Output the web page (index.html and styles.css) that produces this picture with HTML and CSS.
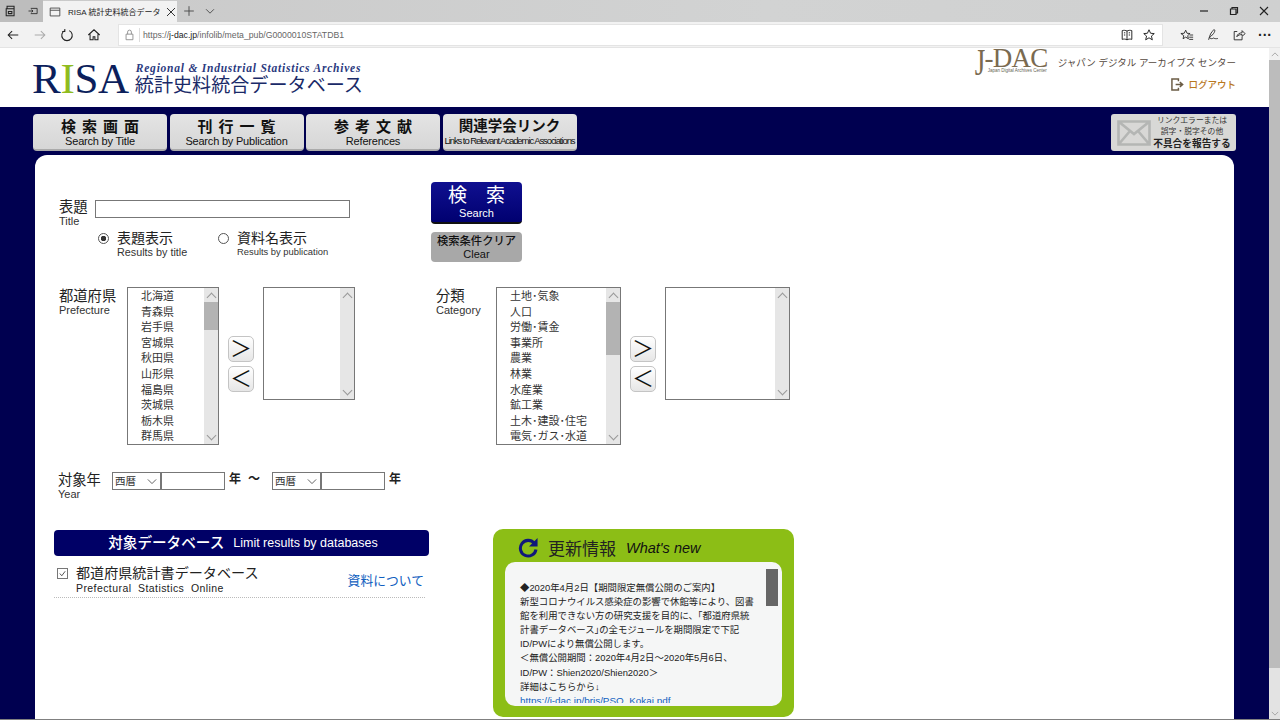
FILE: index.html
```html
<!DOCTYPE html>
<html lang="ja">
<head>
<meta charset="utf-8">
<title>RISA 統計史料統合データベース</title>
<link rel="stylesheet" href="styles.css">
</head>
<body>
<div class="tabbar">
  <div class="tab-tools">
    <svg class="ico" viewBox="0 0 16 16"><path d="M3.500 5.500V2.500h8v3M2.500 5.500h9v8h-9zM5 8.500h4v2.500H5z" fill="none" stroke="#222" stroke-width="1.200"/></svg>
    <svg class="ico tool2" viewBox="0 0 16 16"><path d="M5 4.500h8.500v7H5M2 8h6M6 6.200 8 8l-2 1.800" fill="none" stroke="#222" stroke-width="1.100"/></svg>
  </div>
  <div class="tab">
    <svg class="ico" viewBox="0 0 16 16"><path d="M2.500 3.500h11v9h-11zM2.500 6h11" fill="none" stroke="#444" stroke-width="1"/></svg>
    <span class="tab-title">RISA 統計史料統合データ</span>
    <svg class="ico-s" viewBox="0 0 10 10"><path d="M1 1l8 8M9 1l-8 8" stroke="#333" stroke-width="1"/></svg>
  </div>
  <div class="tab-new">
    <svg class="ico" viewBox="0 0 16 16"><path d="M8 2.500v11M2.500 8h11" stroke="#444" stroke-width="1"/></svg>
    <svg class="ico" viewBox="0 0 16 16"><path d="M3.500 6 8 10.500 12.500 6" fill="none" stroke="#444" stroke-width="1"/></svg>
  </div>
  <div class="win-ctrl">
    <svg class="ico-s" viewBox="0 0 10 10"><path d="M1 5h8" stroke="#222" stroke-width="1.200"/></svg>
    <svg class="ico-s" viewBox="0 0 10 10"><path d="M1.500 3h5.500v5.500H1.500zM3 3V1.500h5.500V7H7" fill="none" stroke="#222" stroke-width="1.200"/></svg>
    <svg class="ico-s" viewBox="0 0 10 10"><path d="M1 1l8 8M9 1l-8 8" stroke="#222" stroke-width="1.100"/></svg>
  </div>
</div>
<div class="toolbar">
  <div class="nav-icons">
    <svg class="ico" viewBox="0 0 16 16"><path d="M14 8H2.500M7 3.500 2.500 8 7 12.500" fill="none" stroke="#222" stroke-width="1.200"/></svg>
    <svg class="ico" viewBox="0 0 16 16"><path d="M2 8h11.500M9 3.500 13.500 8 9 12.500" fill="none" stroke="#aaa" stroke-width="1.200"/></svg>
    <svg class="ico" viewBox="0 0 16 16"><path d="M5.500 3A6 6 0 1 0 10.500 3M5.500 1v3H2.500" fill="none" stroke="#222" stroke-width="1.200"/></svg>
    <svg class="ico" viewBox="0 0 16 16"><path d="M1.500 8 8 2l6.500 6M3.500 7v6.500h3.500V10h2v3.500h3.500V7" fill="none" stroke="#222" stroke-width="1.200"/></svg>
  </div>
  <div class="address">
    <svg class="ico-lock" viewBox="0 0 12 14"><path d="M2 6h8v6.500H2zM3.800 6V3.500a2.200 2.200 0 0 1 4.400 0V6" fill="none" stroke="#888" stroke-width="1"/></svg>
    <span class="url"><span class="url-dim">https://</span>j-dac.jp<span class="url-dim">/infolib/meta_pub/G0000010STATDB1</span></span>
    <span class="addr-icons">
      <svg class="ico" viewBox="0 0 16 16"><path d="M8 3.500C6.500 2.500 4 2.500 2.500 3v10c1.500-.5 4-.5 5.500.5 1.500-1 4-1 5.500-.5V3C12 2.500 9.500 2.500 8 3.500zM8 3.500v10M4.500 5.500h1.500M4.500 8h1.500M10 5.500h1.500M10 8h1.500" fill="none" stroke="#222" stroke-width="1.100"/></svg>
      <svg class="ico" viewBox="0 0 16 16"><path d="M8 2l1.800 4 4.200.4-3.200 2.800 1 4.300L8 11.200l-3.800 2.300 1-4.300L2 6.400 6.200 6z" fill="none" stroke="#222" stroke-width="1.100"/></svg>
    </span>
  </div>
  <div class="tool-right">
    <svg class="ico" viewBox="0 0 16 16"><path d="M6.500 2.500 8 6l3.500.3-2.700 2.400.8 3.600-3.100-1.900-3 1.900.8-3.600L1 6.300 4.800 6zM11 8h4M10.500 10.500H15M10.500 13H15" fill="none" stroke="#222" stroke-width="1"/></svg>
    <svg class="ico" viewBox="0 0 16 16"><path d="M3 13.500C4 9 6 4 9 2c1.500-.5 1.500 2-.5 4.500C7 8.500 5 10 4 11c1 1.500 3 1.500 4.500.5 1 .5 3 1 5 .5" fill="none" stroke="#222" stroke-width="1"/></svg>
    <svg class="ico" viewBox="0 0 16 16"><path d="M6 4H2.500v9.500h9V10M5.500 10c.5-3 3-4.500 6-4.500V3l3.500 3.500-3.500 3V7.500c-2.500 0-4.500.5-6 2.500z" fill="none" stroke="#222" stroke-width="1"/></svg>
    <span class="more">···</span>
  </div>
</div>

<div class="page">
  <main class="main">
    <header class="head">
      <div class="logo">
        <div class="logo-risa">R<span class="logo-i">I</span>SA</div>
        <div class="logo-text">
          <div class="logo-en">Regional &amp; Industrial Statistics Archives</div>
          <div class="logo-ja">統計史料統合データベース</div>
        </div>
      </div>
      <div class="jdac">
        <div class="jdac-top">
          <div class="jdac-logo"><span class="jdac-mark"><span class="jdac-j">J</span>-DAC</span><span class="jdac-sub">Japan Digital Archives Center</span></div>
          <span class="jdac-name">ジャパン デジタル アーカイブズ センター</span>
        </div>
        <a class="logout">
          <svg class="logout-ico" viewBox="0 0 14 14"><path d="M8 3.500V1H1v12h7v-2.500M5 7h7M9.500 4.500 12.500 7l-3 2.500" fill="none" stroke="#6b5c45" stroke-width="1.600"/></svg>
          ログアウト
        </a>
      </div>
    </header>

    <div class="body">
      <nav class="menu">
        <a class="menu-btn"><b class="wide">検索画面</b><span>Search by Title</span></a>
        <a class="menu-btn"><b class="wide">刊行一覧</b><span>Search by Publication</span></a>
        <a class="menu-btn"><b class="wide">参考文献</b><span>References</span></a>
        <a class="menu-btn"><b>関連学会リンク</b><span class="tight">Links to Relevant Academic Associations</span></a>
        <a class="report">
          <svg class="env" viewBox="0 0 34 26"><path d="M1.500 1.500h31v23h-31zM1.500 1.500 17 14 32.500 1.500M1.500 24.500 13 11M32.500 24.500 21 11" fill="none" stroke="#b4b6b4" stroke-width="2.600"/></svg>
          <span class="report-text"><span>リンクエラーまたは</span><span>誤字・脱字その他</span><b>不具合を報告する</b></span>
        </a>
      </nav>

      <section class="panel">
        <div class="row-top">
          <div class="title-block">
            <div class="title-line">
              <div class="lab"><span class="lab-ja">表題</span><span class="lab-en">Title</span></div>
              <div class="text-input title-input"></div>
            </div>
            <div class="radios">
              <div class="radio"><i class="dot on"></i><div><div class="radio-ja">表題表示</div><div class="radio-en">Results by title</div></div></div>
              <div class="radio r2"><i class="dot"></i><div><div class="radio-ja">資料名表示</div><div class="radio-en small">Results by publication</div></div></div>
            </div>
          </div>
          <div class="actions">
            <a class="btn-search"><span class="bs-ja">検　索</span><span>Search</span></a>
            <a class="btn-clear"><b>検索条件クリア</b><span>Clear</span></a>
          </div>
        </div>

        <div class="row-select">
          <div class="picker pref">
            <div class="lab pick-lab"><span class="lab-ja">都道府県</span><span class="lab-en">Prefecture</span></div>
            <div class="list list-pref">
              <ul class="items"><li>北海道</li><li>青森県</li><li>岩手県</li><li>宮城県</li><li>秋田県</li><li>山形県</li><li>福島県</li><li>茨城県</li><li>栃木県</li><li>群馬県</li></ul>
              <div class="sb"><i class="up"></i><i class="thumb th-pref"></i><i class="down"></i></div>
            </div>
            <div class="arrows"><a class="arrow">＞</a><a class="arrow">＜</a></div>
            <div class="list list-out"><ul class="items"></ul><div class="sb"><i class="up"></i><i class="down"></i></div></div>
          </div>
          <div class="picker cat">
            <div class="lab pick-lab cat-lab"><span class="lab-ja">分類</span><span class="lab-en">Category</span></div>
            <div class="list list-cat">
              <ul class="items"><li>土地･気象</li><li>人口</li><li>労働･賃金</li><li>事業所</li><li>農業</li><li>林業</li><li>水産業</li><li>鉱工業</li><li>土木･建設･住宅</li><li>電気･ガス･水道</li></ul>
              <div class="sb"><i class="up"></i><i class="thumb th-cat"></i><i class="down"></i></div>
            </div>
            <div class="arrows"><a class="arrow">＞</a><a class="arrow">＜</a></div>
            <div class="list list-out wide-out"><ul class="items"></ul><div class="sb"><i class="up"></i><i class="down"></i></div></div>
          </div>
        </div>

        <div class="row-year">
          <div class="lab year-lab"><span class="lab-ja">対象年</span><span class="lab-en">Year</span></div>
          <div class="sel">西暦<svg class="caret" viewBox="0 0 12 8"><path d="M1 1.500 6 6.500 11 1.500" fill="none" stroke="#444" stroke-width="1"/></svg></div>
          <div class="text-input year-in"></div>
          <b class="yr">年</b><b class="tilde">～</b>
          <div class="sel">西暦<svg class="caret" viewBox="0 0 12 8"><path d="M1 1.500 6 6.500 11 1.500" fill="none" stroke="#444" stroke-width="1"/></svg></div>
          <div class="text-input year-in"></div>
          <b class="yr">年</b>
        </div>

        <div class="row-bottom">
          <div class="db">
            <h2 class="db-head"><b>対象データベース</b><span>Limit results by databases</span></h2>
            <div class="db-row">
              <i class="check"><svg viewBox="0 0 10 10"><path d="M2 5l2.200 2.500L8 2.500" fill="none" stroke="#444" stroke-width="1"/></svg></i>
              <div class="db-name"><div class="db-ja">都道府県統計書データベース</div><div class="db-en">Prefectural&nbsp; Statistics&nbsp; Online</div></div>
              <a class="db-link">資料について</a>
            </div>
          </div>
          <aside class="news">
            <div class="news-head">
              <svg class="reload" viewBox="0 0 22 22"><path d="M17 6.500A8.200 8.200 0 1 0 18.800 13" fill="none" stroke="#10187a" stroke-width="3.200"/><path d="M20.500 1v9h-9z" fill="#10187a"/></svg>
              <span class="news-ja">更新情報</span><span class="news-en">What's new</span>
            </div>
            <div class="news-box">
              <div class="news-text">◆2020年4月2日【期間限定無償公開のご案内】<br>新型コロナウイルス感染症の影響で休館等により、図書<br>館を利用できない方の研究支援を目的に、｢都道府県統<br>計書データベース｣の全モジュールを期間限定で下記<br>ID/PWにより無償公開します。<br>＜無償公開期間：2020年4月2日～2020年5月6日、<br>ID/PW：Shien2020/Shien2020＞<br>詳細はこちらから↓<br><a class="news-link">https://j-dac.jp/bris/PSO_Kokai.pdf</a></div>
              <div class="news-sb"><i></i></div>
            </div>
          </aside>
        </div>
      </section>
    </div>
  </main>
  <div class="scroll">
    <span class="scroll-btn"><svg viewBox="0 0 10 6"><path d="M1 5l4-4 4 4" fill="none" stroke="#999" stroke-width="1"/></svg></span>
    <span class="scroll-thumb"></span>
    <span class="scroll-track"></span>
    <span class="scroll-btn"><svg viewBox="0 0 10 6"><path d="M1 1l4 4 4-4" fill="none" stroke="#999" stroke-width="1"/></svg></span>
  </div>
</div>
<div class="taskline"></div>
</body>
</html>
```

FILE: styles.css
```css
* { box-sizing: border-box; }
html, body { margin: 0; height: 720px; overflow: hidden; }
body {
  font-family: "Liberation Sans", "Noto Sans CJK JP", sans-serif;
  color: #222;
  background: #fff;
  font-size: 12px;
}
ul { list-style: none; margin: 0; padding: 0; }
h2 { margin: 0; font-weight: normal; }
svg { display: block; flex: none; }
.ico { width: 14px; height: 14px; }
.ico-s { width: 10px; height: 10px; }

.tabbar {
  height: 22px;
  display: flex;
  background: linear-gradient(90deg, #c9c9c9, #d2d3d3 60%, #cfd0d0);
}
.tab-tools { width: 43px; display: flex; align-items: center; padding-left: 4px; gap: 9px; background: #bdbdbd; }
.tool2 { width: 12px; }
.tab {
  width: 134px;
  margin-top: 1px;
  background: #f2f2f2;
  display: flex;
  align-items: center;
  gap: 6px;
  padding-left: 5px;
}
.tab-title { font-size: 8px; width: 92px; white-space: nowrap; color: #222; }
.tab-new { display: flex; align-items: center; gap: 7px; padding-left: 5px; flex: 1; }
.win-ctrl { display: flex; align-items: center; gap: 20px; width: 81px; }

.toolbar {
  height: 26px;
  background: #f2f2f2;
  border-bottom: 1px solid #e4e4e4;
  display: flex;
  align-items: center;
}
.nav-icons { width: 118px; display: flex; gap: 13px; padding-left: 6px; align-items: center; }
.address {
  width: 1045px;
  height: 22px;
  background: #fff;
  border: 1px solid #e4e4e4;
  display: flex;
  align-items: center;
  padding-left: 5px;
}
.ico-lock { width: 11px; height: 12px; margin-right: 4px; }
.url { border-left: 1px solid #ddd; padding-left: 3px; font-size: 8.700px; color: #222; line-height: 14px; white-space: nowrap; }
.url-dim { color: #666; }
.addr-icons { margin-left: auto; display: flex; gap: 8px; padding-right: 6px; }
.tool-right { flex: 1; display: flex; align-items: center; gap: 12px; padding-left: 17px; }
.more { font-size: 14px; font-weight: bold; }

.page { display: flex; height: 671px; }
.main { flex: 1; display: flex; flex-direction: column; min-width: 0; }
.scroll { width: 11px; display: flex; flex-direction: column; background: #e3e3e3; }
.scroll-btn { height: 12px; display: flex; align-items: center; justify-content: center; }
.scroll-btn:first-child { background: #f1f1f1; }
.scroll-btn svg { width: 8px; height: 5px; }
.scroll-thumb { height: 608px; background: #bcbcbc; }
.scroll-track { flex: 1; }
.taskline { height: 1px; background: #808080; }

.head { height: 59px; display: flex; justify-content: space-between; padding: 0 33px 0 32px; background: #fff; }
.logo { display: flex; gap: 6px; align-items: flex-start; color: #0c1f5c; }
.logo-risa { font-family: "Liberation Serif", serif; font-size: 43px; line-height: 43px; letter-spacing: -.3px; margin-top: 9px; }
.logo-i { color: #8fbc1e; }
.logo-text { padding-top: 14px; }
.logo-en { font-family: "Liberation Serif", serif; font-style: italic; font-weight: bold; font-size: 11.500px; line-height: 12px; letter-spacing: .77px; color: #2b3a80; white-space: nowrap; padding-left: 1px; }
.logo-ja { font-size: 19.100px; line-height: 23px; white-space: nowrap; color: #1a2a68; }

.jdac { display: flex; flex-direction: column; align-items: flex-end; }
.jdac-top { display: flex; align-items: flex-start; gap: 10px; }
.jdac-logo { position: relative; width: 73px; height: 34px; }
.jdac-mark { display: block; font-family: "Liberation Serif", serif; font-size: 27px; line-height: 20px; color: #7a6a50; letter-spacing: -.8px; white-space: nowrap; }
.jdac-j { display: inline-block; transform: scaleY(1.4); transform-origin: left top; }
.jdac-sub { position: absolute; left: 13px; top: 20px; font-size: 4.500px; line-height: 5px; color: #665; white-space: nowrap; }
.jdac-name { font-size: 9.500px; line-height: 14px; color: #54483e; margin-top: 8px; white-space: nowrap; }
.logout { display: flex; align-items: center; gap: 4px; color: #b9781f; font-size: 9.500px; margin-top: -5px; font-weight: 500; }
.logout-ico { width: 13px; height: 13px; }

.body { flex: 1; background: #000050; padding-top: 7px; display: flex; flex-direction: column; min-height: 0; }
.menu { display: flex; padding: 0 33px; gap: 2.500px; height: 37px; }
.menu-btn {
  width: 134px;
  height: 37px;
  background: linear-gradient(#e4e4e4, #d6d6d6);
  border-radius: 4px;
  border-bottom: 2px solid #aaa;
  padding-top: 2px;
  display: flex;
  flex-direction: column;
  align-items: center;
  justify-content: center;
  color: #111;
  white-space: nowrap;
}
.menu-btn b { font-size: 14.500px; line-height: 17px; }
.menu-btn b.wide { font-size: 15px; letter-spacing: 6px; margin-right: -6px; }
.menu-btn span { font-size: 11px; line-height: 12px; letter-spacing: -.2px; }
.menu-btn span.tight { font-size: 9.500px; letter-spacing: -1.080px; }
.report {
  margin-left: auto;
  width: 125px;
  height: 37px;
  background: #d8d8d6;
  border-radius: 3px;
  display: flex;
  align-items: center;
  padding-left: 6px;
  gap: 3px;
  color: #333;
}
.env { width: 34px; height: 26px; }
.report-text { display: flex; flex-direction: column; align-items: center; font-size: 7.800px; line-height: 11px; white-space: nowrap; flex: 1; min-width: 0; padding-right: 6px; }
.report-text b { font-size: 9.700px; line-height: 13px; color: #222; }

.panel {
  margin: 4px 35px 0;
  width: 1199px;
  flex: 1;
  background: #fff;
  border-radius: 12px 12px 0 0;
  padding: 27px 0 0 19px;
  min-height: 0;
  overflow: hidden;
}
.row-top { display: flex; height: 105px; }
.title-block { width: 377px; padding-top: 17px; padding-left: 5px; }
.title-line { display: flex; gap: 7px; }
.lab { display: flex; flex-direction: column; }
.lab-ja { font-size: 14.300px; line-height: 16px; white-space: nowrap; }
.lab-en { font-size: 11px; line-height: 12px; color: #333; white-space: nowrap; }
.text-input { border: 1px solid #777; background: #fff; height: 18px; }
.title-input { width: 255px; margin-top: 1px; }
.year-in { margin-top: 0; }
.radios { display: flex; margin-top: 3px; padding-left: 39px; }
.radio { display: flex; gap: 8px; width: 120px; }
.r2 { width: auto; }
.dot { width: 11px; height: 11px; border: 1px solid #555; border-radius: 50%; margin-top: 3px; background: #fff; display: block; }
.dot.on { background: radial-gradient(circle, #333 0 2.500px, #fff 3px); }
.radio-ja { font-size: 14px; line-height: 17px; white-space: nowrap; }
.radio-en { font-size: 10.800px; line-height: 12px; color: #333; white-space: nowrap; margin-top: -1px; }
.radio-en.small { font-size: 9.400px; }
.actions { width: 91px; display: flex; flex-direction: column; gap: 8px; }
.btn-search {
  height: 42px;
  background: linear-gradient(#101090, #000070);
  border-bottom: 2px solid #111;
  border-radius: 4px;
  color: #fff;
  display: flex;
  flex-direction: column;
  align-items: center;
  font-size: 11px;
  line-height: 13px;
  padding-top: 3px;
}
.bs-ja { font-size: 19px; line-height: 22px; }
.btn-clear {
  height: 30px;
  background: #a8a8a8;
  border-radius: 4px;
  display: flex;
  flex-direction: column;
  align-items: center;
  padding-top: 3px;
  color: #111;
  line-height: 13px;
  font-size: 11px;
}
.btn-clear b { font-size: 11.300px; font-weight: 500; line-height: 13px; white-space: nowrap; }

.row-select { display: flex; height: 158px; }
.picker { display: flex; }
.pref { width: 377px; padding-left: 5px; }
.pick-lab { width: 68px; padding-top: 1px; }
.cat { padding-left: 5px; }
.cat-lab { width: 60px; }
.list { border: 1px solid #777; display: flex; background: #fff; }
.list-pref { width: 92px; height: 158px; }
.list-cat { width: 125px; height: 158px; }
.list-out { width: 92px; height: 113px; }
.wide-out { width: 125px; }
.items { flex: 1; padding: 1px 0 0 13px; overflow: hidden; }
.items li { font-size: 11px; line-height: 15.600px; height: 15.600px; color: #333; white-space: nowrap; }
.sb { width: 14px; background: #e6e6e6; display: flex; flex-direction: column; }
.sb i { display: block; }
.up, .down { height: 14px; position: relative; }
.up::after, .down::after { content: ""; position: absolute; left: 4px; width: 6px; height: 6px; border-left: 1px solid #999; border-top: 1px solid #999; transform: rotate(45deg); top: 6px; }
.down { margin-top: auto; }
.down::after { transform: rotate(225deg); top: 2px; }
.thumb { background: #b3b3b3; }
.th-pref { height: 28px; }
.th-cat { height: 53px; }
.arrows { width: 44px; display: flex; flex-direction: column; gap: 4px; padding: 49px 0 0 9px; }
.arrow {
  width: 26px;
  height: 26px;
  border: 1px solid #c4c4c4;
  border-radius: 5px;
  background: linear-gradient(#fff, #e6e6e6);
  font-size: 22px;
  line-height: 23px;
  text-align: center;
  color: #111;
  white-space: nowrap;
  overflow: hidden;
}

.row-year { display: flex; align-items: flex-start; margin-top: 27px; height: 58px; padding-left: 4px; }
.year-lab { width: 54px; }
.sel { width: 49px; height: 18px; border: 1px solid #777; font-size: 10.500px; line-height: 16px; padding: 0 3px 0 2px; display: flex; justify-content: space-between; align-items: center; color: #333; }
.caret { width: 10px; height: 7px; }
.year-in { width: 64px; }
.yr { font-size: 12px; line-height: 14px; margin-left: 4px; }
.tilde { font-size: 12px; line-height: 14px; margin: 0 12px 0 7px; }

.row-bottom { display: flex; align-items: flex-start; }
.db { width: 375px; margin-right: 64px; }
.db-head { height: 26px; background: #000066; border-radius: 4px; color: #fff; display: flex; justify-content: center; align-items: center; gap: 9px; padding-left: 3px; }
.db-head b { font-size: 14.600px; font-weight: 500; padding-bottom: 3px; }
.db-head span { font-size: 12.500px; }
.db-row { display: flex; align-items: flex-start; padding: 9px 1px 2px 3px; border-bottom: 1px dotted #bbb; height: 42px; margin-right: 4px; }
.check { width: 11px; height: 11px; border: 1px solid #777; margin-top: 3px; display: block; }
.check svg { width: 9px; height: 9px; }
.db-name { margin-left: 8px; flex: 1; }
.db-ja { font-size: 14.100px; line-height: 17px; white-space: nowrap; }
.db-en { font-size: 10.500px; line-height: 12px; letter-spacing: .42px; white-space: nowrap; }
.db-link { font-size: 12.800px; color: #1060c0; margin-top: 5px; white-space: nowrap; }

.news { width: 301px; height: 188px; margin-top: -1px; background: #8cbe16; border-radius: 10px; padding: 0 12px; }
.news-head { height: 33px; display: flex; align-items: center; padding: 4px 0 0 13px; }
.reload { width: 21px; height: 21px; margin-right: 9px; }
.news-ja { font-size: 17px; margin-right: 10px; }
.news-en { font-size: 14.500px; font-style: italic; color: #111; }
.news-box { height: 144px; background: #f5f6f6; border-radius: 10px; display: flex; overflow: hidden; padding-right: 4px; }
.news-text { flex: 1; height: 141px; padding: 19px 0 0 15px; font-size: 9.400px; line-height: 14.100px; color: #222; white-space: nowrap; overflow: hidden; }
.news-link { color: #1060c0; font-size: 9.900px; }
.news-sb { width: 12px; padding-top: 7px; }
.news-sb i { display: block; height: 37px; background: #666; }
```
